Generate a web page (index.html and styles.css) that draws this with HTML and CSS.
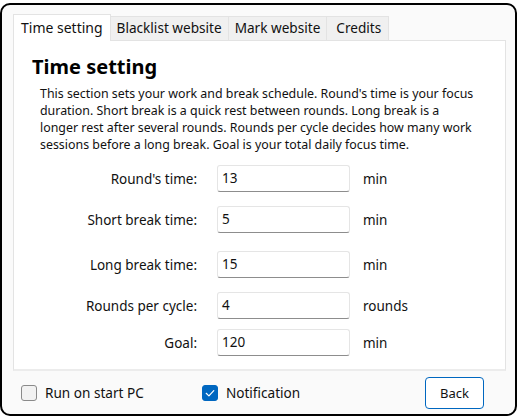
FILE: index.html
```html
<!DOCTYPE html>
<html>
<head>
<meta charset="utf-8">
<link rel="stylesheet" href="styles.css">
</head>
<body>
<div class="window">
  <div class="tabs">
    <div class="tab active">Time setting</div>
    <div class="tab">Blacklist website</div>
    <div class="tab">Mark website</div>
    <div class="tab wide">Credits</div>
  </div>
  <div class="panel">
    <h1 class="title">Time setting</h1>
    <p class="desc">This section sets your work and break schedule. Round's time is your focus duration. Short break is a quick rest between rounds. Long break is a longer rest after several rounds. Rounds per cycle decides how many work sessions before a long break. Goal is your total daily focus time.</p>
    <div class="form">
      <div class="row r1"><label class="lbl">Round's time:</label><div class="input">13</div><span class="unit">min</span></div>
      <div class="row r2"><label class="lbl">Short break time:</label><div class="input">5</div><span class="unit">min</span></div>
      <div class="row r3"><label class="lbl">Long break time:</label><div class="input">15</div><span class="unit">min</span></div>
      <div class="row r4"><label class="lbl">Rounds per cycle:</label><div class="input">4</div><span class="unit">rounds</span></div>
      <div class="row r5"><label class="lbl">Goal:</label><div class="input">120</div><span class="unit">min</span></div>
    </div>
  </div>
  <div class="footer">
    <div class="check"><span class="box"></span><span>Run on start PC</span></div>
    <div class="check notif"><span class="box checked"><svg width="16" height="16" viewBox="0 0 16 16"><path d="M4.2 8.3 L6.9 10.9 L11.8 5.6" fill="none" stroke="#fff" stroke-width="1.2" stroke-linecap="round" stroke-linejoin="round"/></svg></span><span>Notification</span></div>
    <div class="spacer"></div>
    <button class="btn">Back</button>
  </div>
</div>
</body>
</html>
```
FILE: styles.css
```css
html, body {
  margin: 0;
  padding: 0;
  background: #ffffff;
}
body {
  font-family: "Noto Sans", "Open Sans", sans-serif;
  color: #111;
}
.window {
  box-sizing: border-box;
  margin-top: 3px;
  width: 517px;
  height: 413px;
  border: 2px solid #000;
  border-radius: 10px;
  background: #fafafa;
  padding: 8px 0 0 11px;
  display: flex;
  flex-direction: column;
}
.tabs {
  display: flex;
  align-items: flex-end;
  height: 27px;
}
.tab {
  box-sizing: border-box;
  height: 24px;
  padding: 0 6px;
  font-size: 13.6px;
  line-height: 22px;
  background: #f0f0f0;
  border: 1px solid #e3e3e3;
  border-bottom: none;
  border-left: none;
  color: #111;
}
.tab.wide {
  padding: 0 7px 0 9px;
}
.tab.active {
  height: 27px;
  line-height: 25px;
  padding: 0 7px;
  font-size: 14px;
  background: #ffffff;
  border-left: 1px solid #e3e3e3;
  position: relative;
  top: 1px;
}
.panel {
  box-sizing: border-box;
  width: 493px;
  height: 331px;
  background: #ffffff;
  border: 1px solid #e3e3e3;
  border-bottom: 2px solid #ececec;
  padding: 13px 18px 0 18px;
}
.title {
  margin: 0;
  font-size: 20px;
  font-weight: bold;
  line-height: 26px;
  color: #000;
}
.desc {
  width: 438px;
  margin: 5px 0 0 8px;
  font-size: 12.4px;
  line-height: 17px;
  color: #111;
}
.form {
  margin-top: 12px;
  margin-left: 15px;
}
.row {
  display: flex;
  align-items: center;
  height: 27px;
}
.r2 { margin-top: 14px; }
.r3 { margin-top: 18px; }
.r4 { margin-top: 14px; }
.r5 { margin-top: 10px; }
.lbl {
  width: 150px;
  text-align: right;
  font-size: 13.5px;
  color: #111;
}
.input {
  box-sizing: border-box;
  margin-left: 20px;
  width: 133px;
  height: 27px;
  border: 1px solid #e5e5e5;
  border-bottom: 1px solid #8d8d8d;
  border-radius: 3px;
  background: #fff;
  padding: 0 0 0 4px;
  font-size: 13.5px;
  line-height: 25px;
  color: #111;
}
.unit {
  margin-left: 13px;
  font-size: 13.5px;
  color: #111;
}
.footer {
  display: flex;
  align-items: center;
  height: 43px;
  padding: 0 31px 0 8px;
}
.check {
  display: flex;
  align-items: center;
  font-size: 13.6px;
  color: #111;
}
.notif {
  margin-left: 58px;
}
.box {
  box-sizing: border-box;
  width: 16px;
  height: 16px;
  border: 1px solid #8a8a8a;
  border-radius: 3px;
  background: #f2f2f2;
  margin-right: 8px;
  display: flex;
}
.box.checked {
  background: #0067c0;
  border-color: #0067c0;
}
.box svg {
  margin: -1px;
}
.spacer {
  flex: 1;
}
.btn {
  box-sizing: border-box;
  width: 59px;
  height: 32px;
  border: 1px solid #0067c0;
  border-radius: 4px;
  background: #fff;
  font-family: "Noto Sans", "Open Sans", sans-serif;
  font-size: 13px;
  color: #111;
  padding: 0;
}
```
